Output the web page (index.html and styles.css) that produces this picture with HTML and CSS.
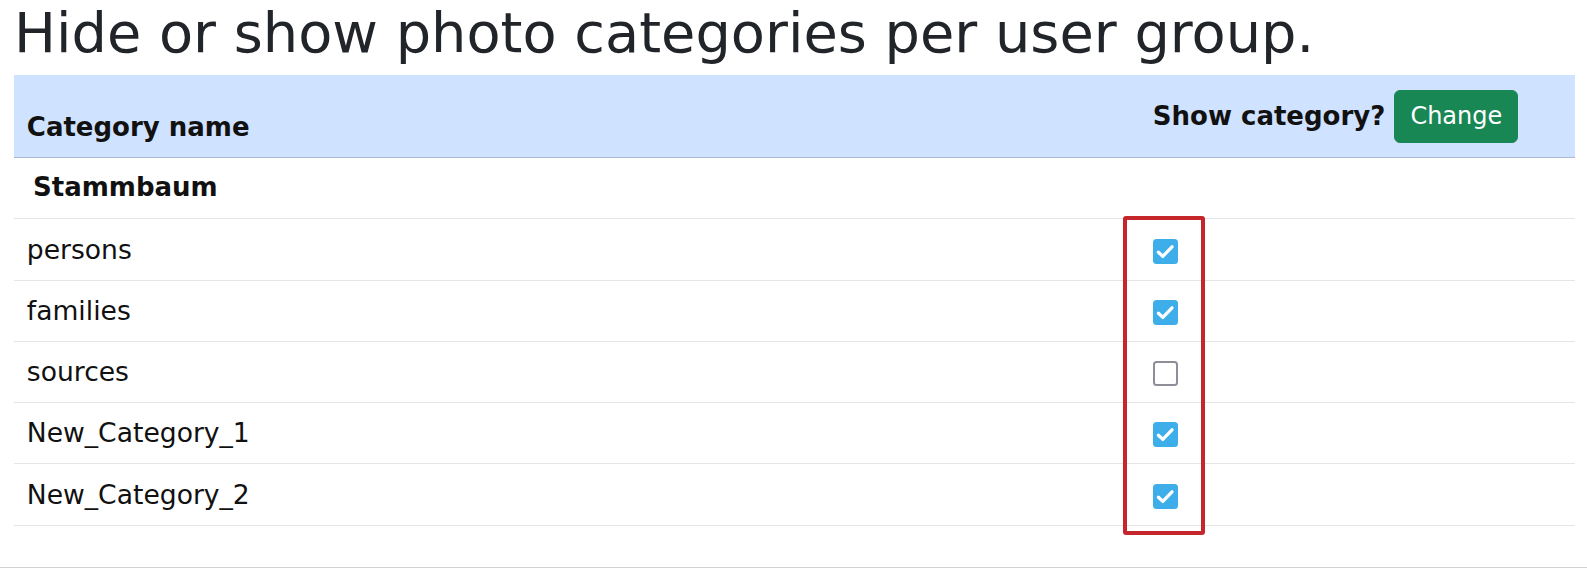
FILE: index.html
```html
<!DOCTYPE html>
<html lang="en">
<head>
<meta charset="utf-8">
<title>Photo categories per user group</title>
<link rel="stylesheet" href="styles.css">
</head>
<body>
<div class="page">
  <h1 class="title">Hide or show photo categories per user group.</h1>
  <table class="cat-table">
    <colgroup>
      <col class="col-name">
      <col class="col-show">
    </colgroup>
    <thead>
      <tr>
        <th class="th-name">Category name</th>
        <th class="th-show">Show category? <button class="btn-change" type="button">Change</button></th>
      </tr>
    </thead>
    <tbody>
      <tr>
        <td class="group-name">Stammbaum</td>
        <td></td>
      </tr>
      <tr>
        <td>persons</td>
        <td><span class="cb cb-on"><svg viewBox="0 0 25 25" width="25" height="25"><path d="M5.4 13.2 L9.8 17.4 L19 7.8" class="tick"/></svg></span></td>
      </tr>
      <tr>
        <td>families</td>
        <td><span class="cb cb-on"><svg viewBox="0 0 25 25" width="25" height="25"><path d="M5.4 13.2 L9.8 17.4 L19 7.8" class="tick"/></svg></span></td>
      </tr>
      <tr>
        <td>sources</td>
        <td><span class="cb cb-off"></span></td>
      </tr>
      <tr>
        <td>New_Category_1</td>
        <td><span class="cb cb-on"><svg viewBox="0 0 25 25" width="25" height="25"><path d="M5.4 13.2 L9.8 17.4 L19 7.8" class="tick"/></svg></span></td>
      </tr>
      <tr>
        <td>New_Category_2</td>
        <td><span class="cb cb-on"><svg viewBox="0 0 25 25" width="25" height="25"><path d="M5.4 13.2 L9.8 17.4 L19 7.8" class="tick"/></svg></span></td>
      </tr>
    </tbody>
  </table>
</div>
<div class="bottom-rule"></div>
<div class="highlight-box"></div>
</body>
</html>
```

FILE: styles.css
```css
html, body {
  margin: 0;
  padding: 0;
  background: #ffffff;
}

body {
  position: relative;
  font-family: "DejaVu Sans", "Liberation Sans", sans-serif;
  color: #111111;
}

.page {
  padding: 0 12px 0 14px;
}

.title {
  margin: 0 0 10px 0;
  font-size: 55.8px;
  font-weight: 400;
  line-height: 65px;
  color: #212529;
}

.cat-table {
  width: 100%;
  border-collapse: collapse;
  table-layout: fixed;
  font-size: 26.6px;
  line-height: 39.6px;
}

.col-show {
  width: 435px;
}

.cat-table thead tr {
  background: #cfe2ff;
}

.cat-table th {
  text-align: left;
  font-size: 26px;
  line-height: 39px;
  font-weight: 700;
  vertical-align: bottom;
  padding: 10.5px 12.8px;
  border-bottom: 1px solid #a9b9d0;
  white-space: nowrap;
}

.btn-change {
  display: inline-block;
  margin: 4px 0;
  padding: 7.5px 15px;
  font-family: "DejaVu Sans", "Liberation Sans", sans-serif;
  font-size: 24px;
  line-height: 36px;
  font-weight: 400;
  color: #ffffff;
  background: #198754;
  border: 1px solid #198754;
  border-radius: 6px;
  vertical-align: baseline;
}

.cat-table td {
  padding: 10.35px 12.8px;
  border-bottom: 1px solid #e3e5e8;
  vertical-align: middle;
}

.cat-table td.group-name {
  font-weight: 700;
  font-size: 26px;
  padding-left: 19px;
}

.cb {
  display: inline-block;
  width: 25px;
  height: 25px;
  box-sizing: border-box;
  border-radius: 3.5px;
  vertical-align: middle;
}

.cb svg {
  display: block;
}

.cb-on {
  background: #3daee9;
}

.cb-off {
  background: #ffffff;
  border: 2.5px solid #8e8e99;
}

.tick {
  fill: none;
  stroke: #ffffff;
  stroke-width: 3.3;
  stroke-linecap: round;
  stroke-linejoin: round;
}

.bottom-rule {
  margin-top: 41px;
  border-top: 1px solid #d2d2d2;
}

.highlight-box {
  position: absolute;
  left: 1123px;
  top: 216px;
  width: 82px;
  height: 319px;
  box-sizing: border-box;
  border: 4px solid #c4262b;
  border-radius: 3px;
}
```
